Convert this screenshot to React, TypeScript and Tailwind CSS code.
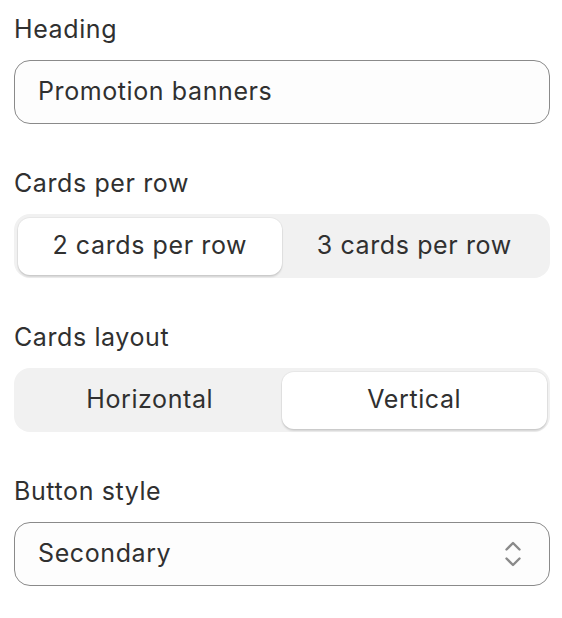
const fieldLabel = 'text-[25px] leading-[32px] tracking-[0.6px] text-[#303030]';

function Segmented({ options, selected }: { options: string[]; selected: number }) {
  return (
    <div className="grid h-[64px] grid-cols-2 rounded-[16px] bg-[#f1f1f1] p-[3.5px]">
      {options.map((opt, i) => (
        <div
          key={opt}
          className={
            i === selected
              ? 'flex items-center justify-center rounded-[12px] bg-white text-[25px] tracking-[0.6px] text-[#303030] shadow-[0_2px_2px_rgba(0,0,0,0.13),0_0_0_1px_rgba(0,0,0,0.04)]'
              : 'flex items-center justify-center rounded-[12px] text-[25px] tracking-[0.6px] text-[#303030]'
          }
        >
          {opt}
        </div>
      ))}
    </div>
  );
}

export default function App() {
  return (
    <div
      className="min-h-[618px] w-[562px] bg-white pl-[14px] pr-[12px] pt-[13px] antialiased"
      style={{ fontFamily: 'Inter, "Noto Sans", sans-serif' }}
    >
      <div className="flex flex-col gap-[43px]">
        {/* Heading */}
        <div className="flex flex-col gap-[15px]">
          <span className={fieldLabel}>Heading</span>
          <div className="flex h-[64px] items-center rounded-[16px] border border-[#8a8a8a] bg-[#fdfdfd] pl-[23px] text-[25px] tracking-[0.6px] text-[#303030]">
            Promotion banners
          </div>
        </div>

        {/* Cards per row */}
        <div className="flex flex-col gap-[15px]">
          <span className={fieldLabel}>Cards per row</span>
          <Segmented options={['2 cards per row', '3 cards per row']} selected={0} />
        </div>

        {/* Cards layout */}
        <div className="flex flex-col gap-[15px]">
          <span className={fieldLabel}>Cards layout</span>
          <Segmented options={['Horizontal', 'Vertical']} selected={1} />
        </div>

        {/* Button style */}
        <div className="flex flex-col gap-[15px]">
          <span className={fieldLabel}>Button style</span>
          <div className="flex h-[64px] items-center justify-between rounded-[16px] border border-[#8a8a8a] bg-[#fdfdfd] pl-[23px] pr-[28px] text-[25px] tracking-[0.6px] text-[#303030]">
            <span>Secondary</span>
            <svg width="16" height="26" viewBox="0 0 16 26" fill="none" aria-hidden="true">
              <path
                d="M1.5 8.5L8 2L14.5 8.5"
                stroke="#8a8a8a"
                strokeWidth="2.4"
                strokeLinecap="round"
                strokeLinejoin="round"
              />
              <path
                d="M1.5 17.5L8 24L14.5 17.5"
                stroke="#8a8a8a"
                strokeWidth="2.4"
                strokeLinecap="round"
                strokeLinejoin="round"
              />
            </svg>
          </div>
        </div>
      </div>
    </div>
  );
}
